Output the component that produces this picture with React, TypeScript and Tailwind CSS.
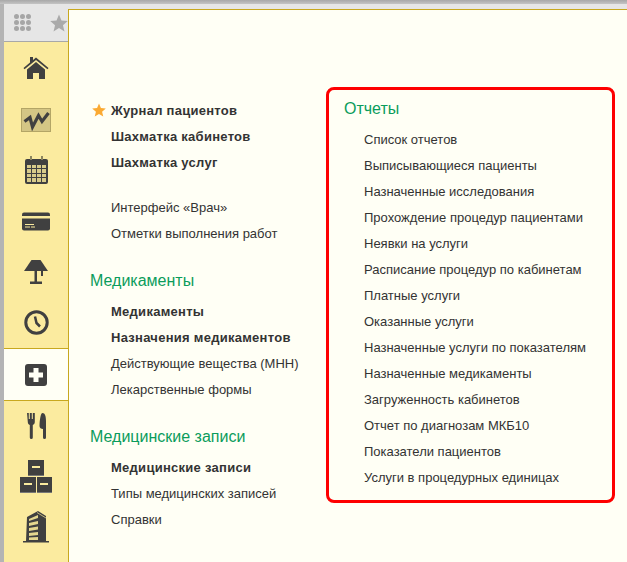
const F = "font-['Liberation_Sans',Arial,sans-serif]";

function Star({ size, color }: { size: number; color: string }) {
  return (
    <svg width={size} height={size} viewBox="0 0 24 24" fill={color} className="shrink-0">
      <path d="M12 .8l3.300 7.900 8.400.7-6.400 5.500 2 8.300L12 18.800l-7.300 4.400 2-8.300L.3 9.400l8.400-.7z" />
    </svg>
  );
}
function Home() {
  return (
    <svg width="26" height="24" viewBox="0 0 26 24" fill="#404040">
      <path d="M7 1h3v3l3-2.500L25.500 12l-1 1.200L13 4 1.500 13.200l-1-1.200L7 6.500z" />
      <path d="M4 13.500 13 6l9 7.500V23h-6v-6h-6v6H4z" />
    </svg>
  );
}
function Chart() {
  return (
    <div className="flex h-[24px] w-[30px] border border-[#b3a566] bg-[#d4c685]">
      <svg width="28" height="22" viewBox="0 0 28 22" fill="none" stroke="#404040" strokeWidth="3.200" strokeLinejoin="miter">
        <path d="M2.500 12.500 8 8.500l2.500 9.500L16.500 6.500l3.500 6 6.500-8.500" />
      </svg>
    </div>
  );
}
function Calendar() {
  const cells = Array.from({ length: 16 });
  return (
    <div className="relative h-[25px] w-[23px] rounded-[2px] bg-[#404040] pt-[6px]">
      <span className="absolute left-[5px] top-[-3px] h-[4px] w-[2px] bg-[#8c8660]" />
      <span className="absolute right-[5px] top-[-3px] h-[4px] w-[2px] bg-[#8c8660]" />
      <div className="mx-[2px] grid grid-cols-4 gap-[1px]">
        {cells.map((_, i) => (
          <span key={i} className="h-[3.500px] bg-[#d8cb8a]" />
        ))}
      </div>
    </div>
  );
}
function Card() {
  return (
    <svg width="28" height="19" viewBox="0 0 28 19">
      <rect width="28" height="18" y="0.500" rx="2" fill="#404040" />
      <rect y="4" width="28" height="2.500" fill="#f9ea9e" />
      <path d="M3 12h9v1H3zM3 14.500h5v1H3zM9 14.500h4v1H9z" fill="#f9ea9e" />
    </svg>
  );
}
function Lamp() {
  return (
    <svg width="24" height="24" viewBox="0 0 24 24" fill="#404040">
      <path d="M7.500 0h9L24 11H0z" />
      <rect x="10.500" y="11" width="2.500" height="11" />
      <rect x="6" y="21.500" width="12" height="2.500" />
      <rect x="17" y="11" width="2" height="5" />
    </svg>
  );
}
function Clock() {
  return (
    <svg width="25" height="25" viewBox="0 0 25 25" fill="none" stroke="#404040">
      <circle cx="12.500" cy="12.500" r="10.700" strokeWidth="3" />
      <path d="M11 6.500 12.500 13l3.500 3.500" strokeWidth="2.500" />
    </svg>
  );
}
function Plus() {
  return (
    <svg width="22" height="22" viewBox="0 0 22 22">
      <rect width="22" height="22" rx="3" fill="#404040" />
      <path d="M8.500 4h5v4.500H18v5h-4.500V18h-5v-4.500H4v-5h4.500z" fill="#fffff5" />
    </svg>
  );
}
function Fork() {
  return (
    <svg width="19" height="26" viewBox="0 0 19 26" fill="#404040">
      <path d="M0 0h1.800v6h1V0h2v6h1V0h2v9c0 1.500-1 2.500-2 3v12.500a1.500 1.500 0 0 1-3 0V12c-1.200-.5-2-1.500-2-3z" />
      <path d="M15.500 0c2.500 0 3.500 3 3.500 8v16.500a1.500 1.500 0 0 1-3 0V16c-2 0-3.500-1-3.500-3 0-5 1-13 3-13z" />
    </svg>
  );
}
function Box({ className = "" }: { className?: string }) {
  return (
    <div className={`flex h-[16px] w-[15.500px] items-center justify-center border-b border-[#777] bg-[#404040] ${className}`}>
      <span className="h-[2px] w-[8px] bg-[#f9ea9e]" />
    </div>
  );
}
function Boxes() {
  return (
    <div className="flex w-[32px] flex-col items-center gap-[1px]">
      <Box />
      <div className="flex gap-[1px]">
        <Box />
        <Box />
      </div>
    </div>
  );
}
function Building() {
  return (
    <svg width="26" height="33" viewBox="0 0 26 33">
      <path d="M4 7 15 1l8 5v25h3v1.500H0V31h3z" fill="#404040" />
      <path d="M6 9l9-4v3l-9 3zM6 13l9-2v3l-9 2zM6 18l9-1.500v3L6 21zM6 23l9-1v3l-9 1zM6 27.500l9-.5v3H6z" fill="#e4d78f" />
      <path d="M14 2.500 23 8" stroke="#e4d78f" strokeWidth="0.800" />
    </svg>
  );
}

const rail = [
  { el: <Home />, h: "h-[52px]" },
  { el: <Chart />, h: "h-[52px]" },
  { el: <Calendar />, h: "h-[50px]" },
  { el: <Card />, h: "h-[50px]" },
  { el: <Lamp />, h: "h-[51px]" },
  { el: <Clock />, h: "h-[51px]" },
];

function Item({ t, b, star }: { t: string; b?: boolean; star?: boolean }) {
  return (
    <div className={`relative flex h-[26px] items-center text-[13px] text-[#333] ${b ? "font-bold tracking-[0.270px]" : ""}`}>
      {star && (
        <span className="absolute left-[-19px] top-[5px]">
          <Star size={14} color="#fbaa33" />
        </span>
      )}
      {t}
    </div>
  );
}
function Heading({ t }: { t: string }) {
  return <div className="flex h-[26px] items-center text-[16px] text-[#0b9c5c]">{t}</div>;
}

const reports = [
  "Список отчетов",
  "Выписывающиеся пациенты",
  "Назначенные исследования",
  "Прохождение процедур пациентами",
  "Неявки на услуги",
  "Расписание процедур по кабинетам",
  "Платные услуги",
  "Оказанные услуги",
  "Назначенные услуги по показателям",
  "Назначенные медикаменты",
  "Загруженность кабинетов",
  "Отчет по диагнозам МКБ10",
  "Показатели пациентов",
  "Услуги в процедурных единицах",
];

export default function App() {
  return (
    <div className={`${F} flex h-[562px] w-[627px] flex-col overflow-hidden bg-[#b4b4b4]`}>
      <div className="h-[4px] shrink-0 bg-gradient-to-b from-[#a8a8a8] to-[#c4c4c4]" />
      <div className="flex min-h-0 flex-1 pl-[4px]">
        <aside className="w-[64px] shrink-0 bg-[#fbeb9f]">
          <div className="flex h-[38px] items-center overflow-hidden border-b border-[#a8a8a8] bg-[#e6e6e6] pl-[10px]">
            <div className="grid w-[17px] shrink-0 grid-cols-3 gap-[1px]">
              {Array.from({ length: 9 }).map((_, i) => (
                <span key={i} className="h-[5px] w-[5px] rounded-full bg-[#a6a6a6]" />
              ))}
            </div>
            <span className="ml-[19px]">
              <Star size={18} color="#aaaaaa" />
            </span>
          </div>
          {rail.map((r, i) => (
            <div key={i} className={`flex ${r.h} items-center justify-center`}>
              {r.el}
            </div>
          ))}
          <div className="flex h-[53px] items-center justify-center border-y border-[#c8a81e] bg-[#fffff5]">
            <Plus />
          </div>
          <div className="flex h-[50px] items-center justify-center"><Fork /></div>
          <div className="flex h-[50px] items-center justify-center"><Boxes /></div>
          <div className="flex h-[50px] items-center justify-center"><Building /></div>
        </aside>
        <div className="min-w-0 flex-1 bg-[#e6e6e6]">
          <main className="mt-[5px] flex h-[553px] border-l border-t border-[#c8a81e] bg-[#fffff5] pl-[21px]">
            <div className="w-[236px] shrink-0 pt-[88px]">
              <div className="pl-[21px]">
                <Item t="Журнал пациентов" b star />
                <Item t="Шахматка кабинетов" b />
                <Item t="Шахматка услуг" b />
                <div className="mt-[19px]">
                  <Item t="Интерфейс «Врач»" />
                  <Item t="Отметки выполнения работ" />
                </div>
              </div>
              <div className="mt-[21px]"><Heading t="Медикаменты" /></div>
              <div className="mt-[5px] pl-[21px]">
                <Item t="Медикаменты" b />
                <Item t="Назначения медикаментов" b />
                <Item t="Действующие вещества (МНН)" />
                <Item t="Лекарственные формы" />
              </div>
              <div className="mt-[21px]"><Heading t="Медицинские записи" /></div>
              <div className="mt-[5px] pl-[21px]">
                <Item t="Медицинские записи" b />
                <Item t="Типы медицинских записей" />
                <Item t="Справки" />
              </div>
            </div>
            <section className="mt-[77px] h-[416px] w-[289px] shrink-0 rounded-[8px] border-[3px] border-[#fe0000] pl-[15px] pt-[6px]">
              <Heading t="Отчеты" />
              <div className="mt-[5px] pl-[20px]">
                {reports.map((r) => (
                  <Item key={r} t={r} />
                ))}
              </div>
            </section>
          </main>
        </div>
      </div>
    </div>
  );
}
